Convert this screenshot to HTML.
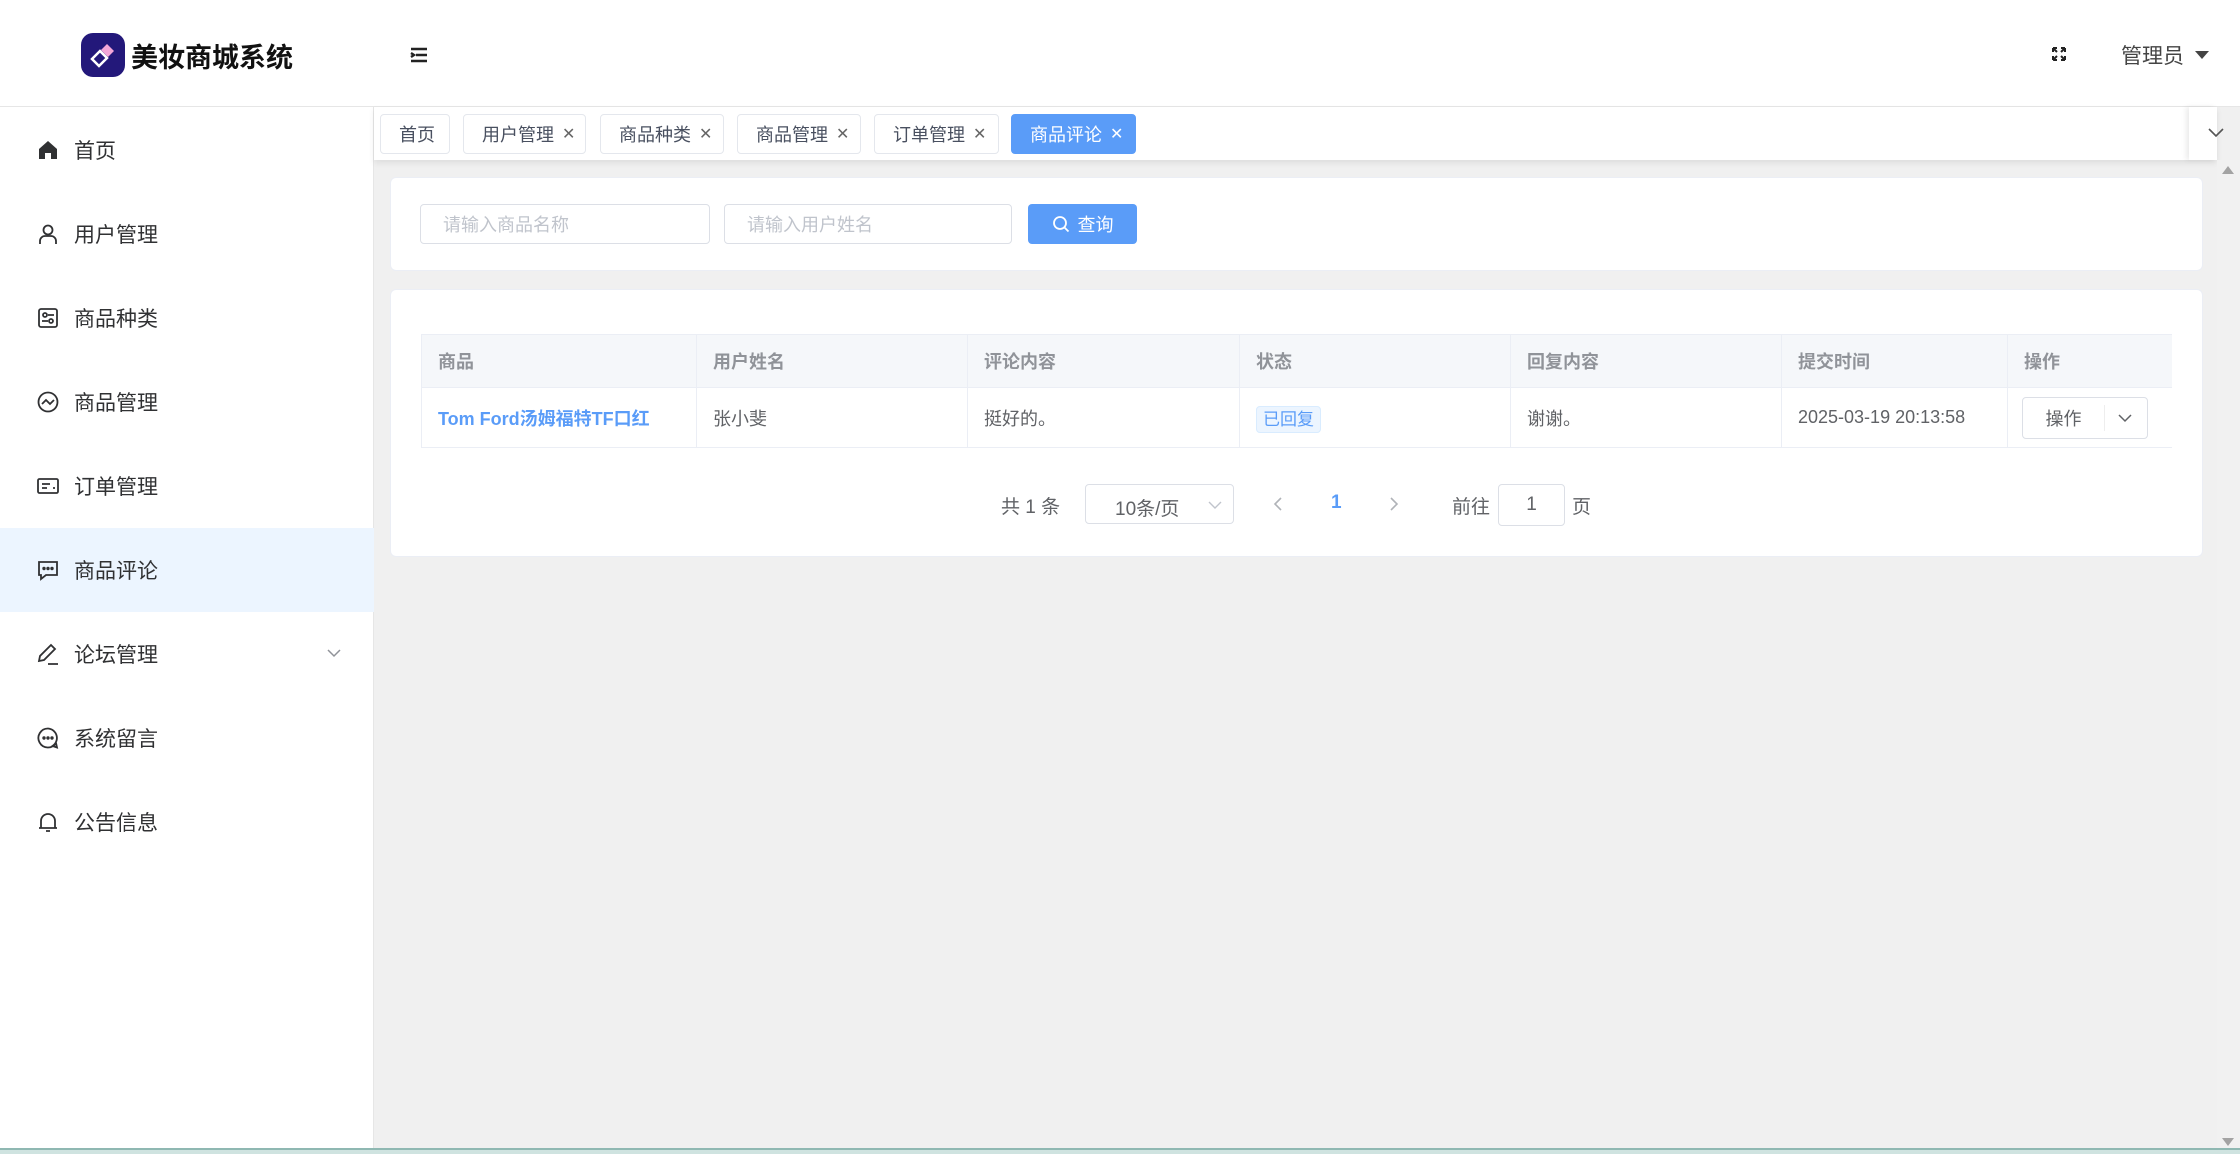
<!DOCTYPE html>
<html><head><meta charset="utf-8"><style>
*{box-sizing:border-box;margin:0;padding:0}
body{width:2240px;height:1154px;overflow:hidden;background:#f0f0f0;font-family:"Liberation Sans","Noto Sans CJK SC",sans-serif;color:#303133;position:relative}
.abs{position:absolute}
.side{left:0;top:0;width:374px;height:1150px;background:#fff;border-right:1px solid #e6e6e6}
.head{left:374px;top:0;width:1866px;height:107px;background:#fff;border-bottom:1px solid #e6e6e6}
.logo{left:0;top:0;width:374px;height:107px;border-bottom:1px solid #e6e6e6;background:#fff}
.mi{left:0;width:374px;height:84px;display:flex;align-items:center;padding-left:36px;font-size:21px;color:#303133}
.mi svg{width:24px;height:24px;margin-right:14px}
.tabs{left:374px;top:107px;width:1843px;height:53px;background:#fff;box-shadow:0 3px 6px rgba(0,0,0,.08)}
.tab{top:7px;height:40px;border:1px solid #e4e7ed;border-radius:4px;font-size:18px;color:#495060;display:flex;align-items:center;padding-left:18px;background:#fff}
.tab .x{margin-left:8px;font-size:16px;color:#666}
.card{background:#fff;border:1px solid #ebeef5;border-radius:6px}
.inp{height:40px;border:1px solid #dcdfe6;border-radius:4px;font-size:18px;color:#c0c4cc;padding-left:22px;display:flex;align-items:center;background:#fff}
th,td{font-size:18px;text-align:left;padding-left:16px;border-right:1px solid #ebeef5;border-bottom:1px solid #ebeef5}
th{background:#f5f7fa;color:#909399;font-weight:bold;height:53px}
td{height:60px;color:#606266}
</style></head><body>
<div class="abs" style="left:0;top:0;width:2240px;height:4px;background:#e8e8e8"></div>
<div class="abs side"></div>
<div class="abs logo">
 <div class="abs" style="left:81px;top:33px;width:44px;height:44px;border-radius:12px;background:#23187a"></div>
 <svg class="abs" style="left:86px;top:38px" width="34" height="34" viewBox="0 0 34 34"><path d="M21 6 L28 13 L22 19 L15 12Z" fill="#f3a6d8"/><path d="M14 13 L21 20 L13 28 L6 21Z" fill="none" stroke="#fff" stroke-width="2.5"/></svg>
 <div class="abs" style="left:131px;top:36px;font-size:27px;font-weight:bold;color:#111">美妆商城系统</div>
</div>
<div class="abs head">
 <svg class="abs" style="left:36px;top:47px" width="18" height="16" viewBox="0 0 18 16"><path d="M1 2h16M6 8h11M1 14h16M1 6l3 2-3 2" stroke="#222" stroke-width="2.4" fill="none"/></svg>
 <svg class="abs" style="left:1677px;top:46px" width="16" height="16" viewBox="0 0 16 16"><path d="M2 2l4 4M2 2h4M2 2v4M14 2l-4 4M14 2h-4M14 2v4M2 14l4-4M2 14h4M2 14v-4M14 14l-4-4M14 14h-4M14 14v-4" stroke="#222" stroke-width="2" fill="none"/></svg>
 <div class="abs" style="left:1747px;top:40px;font-size:21px;color:#444">管理员</div>
 <div class="abs" style="left:1821px;top:51px;border-left:7px solid transparent;border-right:7px solid transparent;border-top:8px solid #444"></div>
</div>
<div class="abs mi" style="top:108px"><svg viewBox="0 0 24 24"><path d="M12 3L3 11v10h6v-6h6v6h6V11z" fill="#303133"/></svg>首页</div>
<div class="abs mi" style="top:192px"><svg viewBox="0 0 24 24" fill="none" stroke="#303133" stroke-width="1.8"><circle cx="12" cy="8" r="4.5"/><path d="M4 22v-3a5 5 0 015-5h6a5 5 0 015 5v3"/></svg>用户管理</div>
<div class="abs mi" style="top:276px"><svg viewBox="0 0 24 24" fill="none" stroke="#303133" stroke-width="1.8"><rect x="3" y="3" width="18" height="18" rx="2"/><circle cx="9" cy="9" r="2"/><circle cx="15" cy="15" r="2"/><path d="M12 9h6M6 15h6"/></svg>商品种类</div>
<div class="abs mi" style="top:360px"><svg viewBox="0 0 24 24" fill="none" stroke="#303133" stroke-width="1.8"><circle cx="12" cy="12" r="9.5"/><path d="M6 14l4-4 4 4 4-4"/></svg>商品管理</div>
<div class="abs mi" style="top:444px"><svg viewBox="0 0 24 24" fill="none" stroke="#303133" stroke-width="1.8"><rect x="2" y="5" width="20" height="14" rx="1.5"/><path d="M6 10h8M6 14h5M17 14h2"/></svg>订单管理</div>
<div class="abs mi" style="top:528px;background:#ecf5ff"><svg viewBox="0 0 24 24" fill="none" stroke="#303133" stroke-width="1.8"><path d="M3 4h18v13H10l-5 4v-4H3z"/><circle cx="8" cy="10.5" r=".8" fill="#303133"/><circle cx="12" cy="10.5" r=".8" fill="#303133"/><circle cx="16" cy="10.5" r=".8" fill="#303133"/></svg>商品评论</div>
<div class="abs mi" style="top:612px"><svg viewBox="0 0 24 24" fill="none" stroke="#303133" stroke-width="1.8"><path d="M15 3l4 4L8 18l-5 1 1-5z M12 22h10"/></svg>论坛管理</div>
<svg class="abs" style="left:327px;top:648px" width="14" height="10" viewBox="0 0 14 10"><path d="M1 2l6 6 6-6" stroke="#909399" stroke-width="1.5" fill="none"/></svg>
<div class="abs mi" style="top:696px"><svg viewBox="0 0 24 24" fill="none" stroke="#303133" stroke-width="1.8"><path d="M12 2.5a9.5 9.5 0 108 14.5l1 4.5-4.5-1.5A9.5 9.5 0 0012 2.5z"/><circle cx="8" cy="12" r=".8" fill="#303133"/><circle cx="12" cy="12" r=".8" fill="#303133"/><circle cx="16" cy="12" r=".8" fill="#303133"/></svg>系统留言</div>
<div class="abs mi" style="top:780px"><svg viewBox="0 0 24 24" fill="none" stroke="#303133" stroke-width="1.8"><path d="M5 18V11a7 7 0 0114 0v7zM3 18h18M10 21h4"/></svg>公告信息</div>

<div class="abs tabs">
 <div class="abs tab" style="left:6px;width:70px">首页</div>
 <div class="abs tab" style="left:89px;width:123px">用户管理<span class="x">✕</span></div>
 <div class="abs tab" style="left:226px;width:124px">商品种类<span class="x">✕</span></div>
 <div class="abs tab" style="left:363px;width:124px">商品管理<span class="x">✕</span></div>
 <div class="abs tab" style="left:500px;width:125px">订单管理<span class="x">✕</span></div>
 <div class="abs tab" style="left:637px;width:125px;background:#5a9cf8;border-color:#5a9cf8;color:#fff">商品评论<span class="x" style="color:#fff">✕</span></div>
 <div class="abs" style="left:1815px;top:0;width:28px;height:53px;box-shadow:-3px 0 5px rgba(0,0,0,.08);background:#fff"></div>
</div>
<svg class="abs" style="left:2207px;top:126px" width="18" height="12" viewBox="0 0 18 12"><path d="M2 3l7 7 7-7" stroke="#555" stroke-width="1.6" fill="none"/></svg>
<div class="abs" style="left:2217px;top:160px;width:23px;height:994px;background:#f1f1f1"></div>
<div class="abs" style="left:2222px;top:166px;border-left:6px solid transparent;border-right:6px solid transparent;border-bottom:8px solid #a3a3a3"></div>
<div class="abs" style="left:2222px;top:1138px;border-left:6px solid transparent;border-right:6px solid transparent;border-top:8px solid #a3a3a3"></div>

<div class="abs card" style="left:390px;top:177px;width:1813px;height:94px">
 <div class="abs inp" style="left:29px;top:26px;width:290px">请输入商品名称</div>
 <div class="abs inp" style="left:333px;top:26px;width:288px">请输入用户姓名</div>
 <div class="abs" style="left:637px;top:26px;width:109px;height:40px;background:#5a9cf8;border-radius:4px;color:#fff;font-size:18px;display:flex;align-items:center;justify-content:center"><svg width="18" height="18" viewBox="0 0 18 18" style="margin-right:8px"><circle cx="8" cy="8" r="6" stroke="#fff" stroke-width="1.8" fill="none"/><path d="M12.5 12.5l4 4" stroke="#fff" stroke-width="1.8"/></svg>查询</div>
</div>

<div class="abs card" style="left:390px;top:289px;width:1813px;height:268px">
 <table class="abs" style="left:30px;top:44px;width:1751px;border-collapse:collapse;border-top:1px solid #ebeef5;border-left:1px solid #ebeef5">
  <tr><th style="width:275px">商品</th><th style="width:271px">用户姓名</th><th style="width:272px">评论内容</th><th style="width:271px">状态</th><th style="width:271px">回复内容</th><th style="width:226px">提交时间</th><th style="border-right:none">操作</th></tr>
  <tr><td style="color:#5a9cf8;font-weight:bold">Tom Ford汤姆福特TF口红</td><td>张小斐</td><td>挺好的。</td><td><span style="background:#ecf5ff;border:1px solid #d9ecff;color:#5a9cf8;border-radius:4px;padding:3px 6px;font-size:17px">已回复</span></td><td>谢谢。</td><td>2025-03-19 20:13:58</td><td style="border-right:none;padding-left:14px"><span style="display:inline-flex;width:126px;height:42px;border:1px solid #dcdfe6;border-radius:4px;align-items:center;font-size:18px;color:#606266"><span style="width:82px;text-align:center;border-right:1px solid #eee">操作</span><svg width="40" height="12" viewBox="0 0 40 12"><path d="M14 3l6 6 6-6" stroke="#606266" stroke-width="1.5" fill="none"/></svg></span></td></tr>
 </table>
 <div class="abs" style="left:610px;top:202px;font-size:19px;color:#606266">共 1 条</div>
 <div class="abs" style="left:694px;top:194px;width:149px;height:40px;border:1px solid #dcdfe6;border-radius:4px;font-size:19px;color:#606266;padding:9px 0 0 29px">10条/页<svg class="abs" style="left:122px;top:15px" width="14" height="10" viewBox="0 0 14 10"><path d="M1 2l6 6 6-6" stroke="#c0c4cc" stroke-width="1.4" fill="none"/></svg></div>
 <svg class="abs" style="left:882px;top:206px" width="10" height="16" viewBox="0 0 10 16"><path d="M8 2L2 8l6 6" stroke="#b0b3b8" stroke-width="1.6" fill="none"/></svg>
 <div class="abs" style="left:940px;top:202px;font-size:19px;color:#5a9cf8;font-weight:bold">1</div>
 <svg class="abs" style="left:998px;top:206px" width="10" height="16" viewBox="0 0 10 16"><path d="M2 2l6 6-6 6" stroke="#b0b3b8" stroke-width="1.6" fill="none"/></svg>
 <div class="abs" style="left:1061px;top:202px;font-size:19px;color:#606266">前往</div>
 <div class="abs" style="left:1107px;top:194px;width:67px;height:42px;border:1px solid #dcdfe6;border-radius:4px;font-size:19px;color:#606266;text-align:center;padding-top:9px">1</div>
 <div class="abs" style="left:1181px;top:202px;font-size:19px;color:#606266">页</div>
</div>
<div class="abs" style="left:0;top:1148px;width:2240px;height:6px;background:#cfe3e0;border-top:2px solid #8fb8b2"></div>
</body></html>
